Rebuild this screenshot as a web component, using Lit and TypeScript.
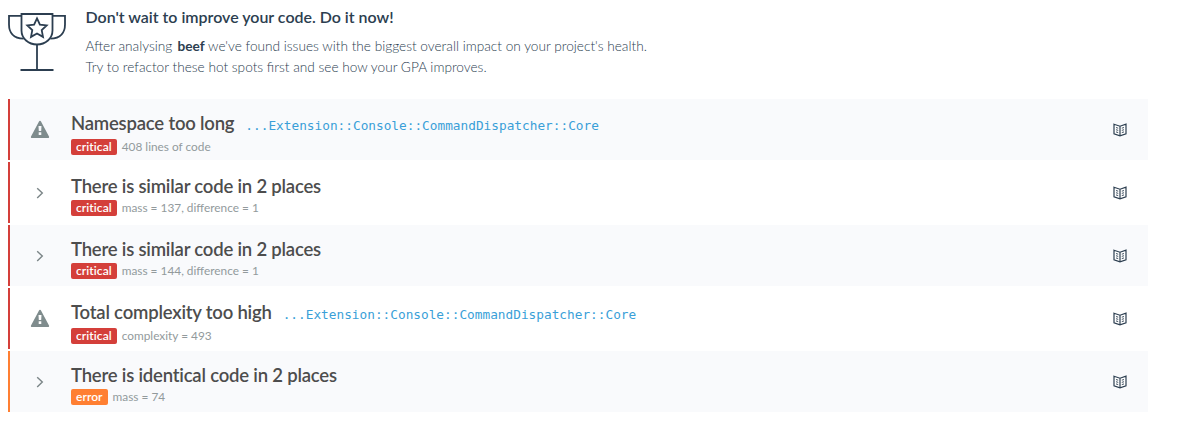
import { LitElement, html, css, nothing } from "lit";
import { customElement, property } from "lit/decorators.js";
import { classMap } from "lit/directives/class-map.js";

interface Issue {
  title: string;
  target?: string;
  severity: "critical" | "error";
  detail: string;
}

const TARGET = "...Extension::Console::CommandDispatcher::Core";

const ISSUES: Issue[] = [
  { title: "Namespace too long", target: TARGET, severity: "critical", detail: "408 lines of code" },
  { title: "There is similar code in 2 places", severity: "critical", detail: "mass = 137, difference = 1" },
  { title: "There is similar code in 2 places", severity: "critical", detail: "mass = 144, difference = 1" },
  { title: "Total complexity too high", target: TARGET, severity: "critical", detail: "complexity = 493" },
  { title: "There is identical code in 2 places", severity: "error", detail: "mass = 74" },
];

const warning = html`<svg width="20" height="18" viewBox="0 0 20 18">
  <path fill="#7f8c8d" fill-rule="evenodd"
    d="M10 .8c.5 0 .8.3 1 .7L19 16.400c.4.800 0 1.600-.9 1.600H1.900c-.9 0-1.300-.8-.9-1.600L9 1.500c.2-.4.500-.7 1-.7zM8.500 6l.3 5h2.400l.3-5zM8.700 12.300v2.600h2.600v-2.600z"/>
</svg>`;

const chevron = html`<svg width="20" height="18" viewBox="0 0 20 18">
  <path fill="none" stroke="#7b8587" stroke-width="1.400" d="M7.200 5.200l5.100 4.900-5.100 4.900"/>
</svg>`;

const book = html`<svg width="14" height="14" viewBox="0 0 14 14" fill="none" stroke="#2c3e50">
  <path fill="#fff" stroke-width="1.200" d="M1 1.200l6 2 6-2v9.600l-6 2-6-2z"/>
  <path stroke-width="1.200" d="M7 3.200v9.600"/>
  <path stroke-width=".9" d="M3 4.500l2.200.7M3 6.700l2.200.7M3 8.900l2.200.7M11 4.500l-2.200.7M11 6.700l-2.200.7M11 8.900l-2.200.7"/>
</svg>`;

@customElement("issue-row")
export class IssueRow extends LitElement {
  @property({ attribute: false }) issue!: Issue;
  @property({ type: Boolean }) shaded = false;

  static styles = css`
    :host { display: block; }
    .row {
      box-sizing: border-box;
      height: 61px;
      display: flex;
      border-left: 2px solid #d43f3a;
    }
    .row.error { border-color: #ff7f32; }
    .row.shaded { background: #f9fafc; }
    .state { width: 20px; margin: 21px 21px 0 20px; }
    svg { display: block; }
    .main { flex: 1; padding-top: 12px; }
    .heading { display: flex; height: 24px; line-height: 24px; white-space: pre; }
    .title {
      font-size: 18.5px;
      font-weight: 600;
      letter-spacing: -0.2px;
      color: #4d4d4d;
    }
    .target {
      margin-left: 11px;
      padding-top: 3px;
      font: 12.78px/24px "DejaVu Sans Mono", monospace;
      color: #3a9fd8;
    }
    .meta { display: flex; align-items: center; margin-top: 2px; height: 16px; gap: 5px; }
    .meta.lower { margin-top: 4px; }
    .badge {
      height: 16px;
      line-height: 16px;
      padding: 0 5px;
      border-radius: 2px;
      background: #d43f3a;
      color: #fff;
      font-size: 12px;
      font-weight: 600;
      letter-spacing: 0.06px;
      font-variant-ligatures: none;
    }
    .error .badge { background: #ff7f32; }
    .detail { font-size: 11.85px; line-height: 16px; color: #929a9c; white-space: pre; }
    .docs { width: 14px; margin: 24px 21px 0 0; }
  `;

  render() {
    const { title, target, severity, detail } = this.issue;
    return html`<div class=${classMap({ row: true, shaded: this.shaded, error: severity === "error" })}>
      <div class="state">${target ? warning : chevron}</div>
      <div class="main">
        <div class="heading"><span class="title">${title}</span>${target ? html`<span class="target">${target}</span>` : nothing}</div>
        <div class=${classMap({ meta: true, lower: !!target })}><span class="badge">${severity}</span><span class="detail">${detail}</span></div>
      </div>
      <div class="docs">${book}</div>
    </div>`;
  }
}

@customElement("app-root")
export class AppRoot extends LitElement {
  static styles = css`
    :host {
      display: block;
      height: 444px;
      overflow: hidden;
      background: #fff;
      color: #2c3e50;
      font-family: Lato, sans-serif;
    }
    .intro { display: flex; height: 99px; padding-left: 8px; box-sizing: border-box; }
    .trophy { width: 58px; margin: 12px 19.5px 0 0; }
    .trophy svg { display: block; }
    .headline { margin: 6px 0 9px; font-size: 15.96px; line-height: 21px; font-weight: 600; white-space: pre; }
    .copy { margin: 0; font-size: 13.66px; line-height: 21px; font-weight: 300; white-space: pre; }
    .copy b { font-weight: 700; margin-left: 1.500px; }
    .list { display: flex; flex-direction: column; gap: 2px; width: 1140px; margin-left: 8px; }
  `;

  render() {
    return html`
      <header class="intro">
        <div class="trophy">
          <svg width="58" height="60" viewBox="0 0 58 60" fill="none" stroke="#2c3e50" stroke-width="1.800">
            <path d="M13.500 2h31v16.500c0 8-7 14-15.500 14s-15.500-6-15.500-14z"/>
            <path d="M13.500 3.900H1v8.600C1 20 5 26.500 15.600 26.700M44.500 3.900H57v8.600c0 7.500-4 14-14.600 14.200"/>
            <path d="M29 32.500V58M12.500 58h33"/>
            <path d="M29 6.300l2.900 6.300 6.800.8-5 4.700 1.300 6.800-6-3.400-6 3.400 1.300-6.800-5-4.700 6.800-.8z"/>
          </svg>
        </div>
        <div>
          <h1 class="headline">Don't wait to improve your code. Do it now!</h1>
          <p class="copy">After analysing <b>beef</b> we've found issues with the biggest overall impact on your project's health.</p>
          <p class="copy">Try to refactor these hot spots first and see how your GPA improves.</p>
        </div>
      </header>
      <main class="list">
        ${ISSUES.map((issue, i) => html`<issue-row .issue=${issue} ?shaded=${i % 2 === 0}></issue-row>`)}
      </main>
    `;
  }
}
